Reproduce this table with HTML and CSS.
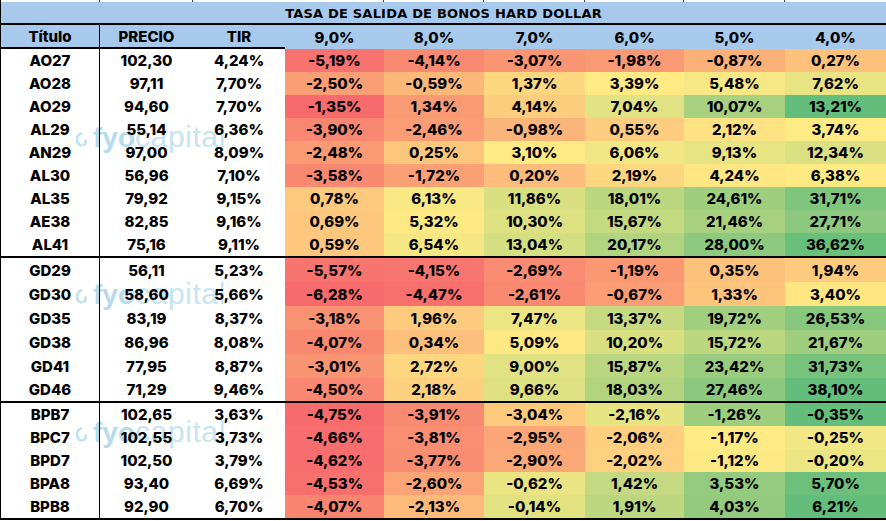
FILE: index.html
```html
<!DOCTYPE html>
<html lang="es">
<head>
<meta charset="utf-8">
<title>Tasa de salida de bonos hard dollar</title>
<link rel="stylesheet" href="styles.css">
</head>
<body>
<div class="sheet">
  <div class="ticks"><span></span><span></span><span></span><span></span><span></span><span></span><span></span><span></span><span></span></div>
  <div class="title">TASA DE SALIDA DE BONOS HARD DOLLAR</div>
  <div class="row head">
    <div class="c n">Título</div><div class="c k">PRECIO</div><div class="c k">TIR</div>
    <div class="c">9,0%</div><div class="c">8,0%</div><div class="c">7,0%</div><div class="c">6,0%</div><div class="c">5,0%</div><div class="c">4,0%</div>
  </div>

  <div class="group g1">
    <div class="row"><div class="c n">AO27</div><div class="c">102,30</div><div class="c">4,24%</div><div class="c" style="background:#F8736F">-5,19%</div><div class="c" style="background:#F98A72">-4,14%</div><div class="c" style="background:#FA9573">-3,07%</div><div class="c" style="background:#FA9A74">-1,98%</div><div class="c" style="background:#FBB078">-0,87%</div><div class="c" style="background:#FCC27C">0,27%</div></div>
    <div class="row"><div class="c n">AO28</div><div class="c">97,11</div><div class="c">7,70%</div><div class="c" style="background:#FA9E75">-2,50%</div><div class="c" style="background:#FCB879">-0,59%</div><div class="c" style="background:#FDD680">1,37%</div><div class="c" style="background:#FFEA84">3,39%</div><div class="c" style="background:#F6E884">5,48%</div><div class="c" style="background:#E9E483">7,62%</div></div>
    <div class="row"><div class="c n">AO29</div><div class="c">94,60</div><div class="c">7,70%</div><div class="c" style="background:#F86B6C">-1,35%</div><div class="c" style="background:#FA9A74">1,34%</div><div class="c" style="background:#FDCD7E">4,14%</div><div class="c" style="background:#E1E283">7,04%</div><div class="c" style="background:#A8D17F">10,07%</div><div class="c" style="background:#63BE7B">13,21%</div></div>
    <div class="row"><div class="c n">AL29</div><div class="c">55,14</div><div class="c">6,36%</div><div class="c" style="background:#F98671">-3,90%</div><div class="c" style="background:#FA9D74">-2,46%</div><div class="c" style="background:#FBB479">-0,98%</div><div class="c" style="background:#FDCC7E">0,55%</div><div class="c" style="background:#FEE283">2,12%</div><div class="c" style="background:#FFEB84">3,74%</div></div>
    <div class="row"><div class="c n">AN29</div><div class="c">97,00</div><div class="c">8,09%</div><div class="c" style="background:#FA9A74">-2,48%</div><div class="c" style="background:#FDC67D">0,25%</div><div class="c" style="background:#FFEA84">3,10%</div><div class="c" style="background:#F1E784">6,06%</div><div class="c" style="background:#E6E483">9,13%</div><div class="c" style="background:#DBE182">12,34%</div></div>
    <div class="row"><div class="c n">AL30</div><div class="c">56,96</div><div class="c">7,10%</div><div class="c" style="background:#F98871">-3,58%</div><div class="c" style="background:#FAA075">-1,72%</div><div class="c" style="background:#FCBC7B">0,20%</div><div class="c" style="background:#FDD680">2,19%</div><div class="c" style="background:#FEE783">4,24%</div><div class="c" style="background:#FEEA83">6,38%</div></div>
    <div class="row"><div class="c n">AL35</div><div class="c">79,92</div><div class="c">9,15%</div><div class="c" style="background:#FDC97D">0,78%</div><div class="c" style="background:#F8E984">6,13%</div><div class="c" style="background:#D8E082">11,86%</div><div class="c" style="background:#BBD780">18,01%</div><div class="c" style="background:#A0CE7F">24,61%</div><div class="c" style="background:#7EC57D">31,71%</div></div>
    <div class="row"><div class="c n">AE38</div><div class="c">82,85</div><div class="c">9,16%</div><div class="c" style="background:#FDC87D">0,69%</div><div class="c" style="background:#FCE983">5,32%</div><div class="c" style="background:#DDE182">10,30%</div><div class="c" style="background:#C4DA81">15,67%</div><div class="c" style="background:#A8D17F">21,46%</div><div class="c" style="background:#8CC97E">27,71%</div></div>
    <div class="row"><div class="c n">AL41</div><div class="c">75,16</div><div class="c">9,11%</div><div class="c" style="background:#FDC77D">0,59%</div><div class="c" style="background:#F5E784">6,54%</div><div class="c" style="background:#D4DF82">13,04%</div><div class="c" style="background:#B0D47F">20,17%</div><div class="c" style="background:#8DC97E">28,00%</div><div class="c" style="background:#68C07B">36,62%</div></div>
  </div>

  <div class="group g2">
    <div class="row"><div class="c n">GD29</div><div class="c">56,11</div><div class="c">5,23%</div><div class="c" style="background:#F8746F">-5,57%</div><div class="c" style="background:#F87670">-4,15%</div><div class="c" style="background:#F98C72">-2,69%</div><div class="c" style="background:#FA9873">-1,19%</div><div class="c" style="background:#FCC27C">0,35%</div><div class="c" style="background:#FDCB7E">1,94%</div></div>
    <div class="row"><div class="c n">GD30</div><div class="c">58,60</div><div class="c">5,66%</div><div class="c" style="background:#F86B6C">-6,28%</div><div class="c" style="background:#F8706D">-4,47%</div><div class="c" style="background:#F98A71">-2,61%</div><div class="c" style="background:#FA9D74">-0,67%</div><div class="c" style="background:#FDC47C">1,33%</div><div class="c" style="background:#FEE683">3,40%</div></div>
    <div class="row"><div class="c n">GD35</div><div class="c">83,19</div><div class="c">8,37%</div><div class="c" style="background:#F99272">-3,18%</div><div class="c" style="background:#FDCB7E">1,96%</div><div class="c" style="background:#ECE583">7,47%</div><div class="c" style="background:#C8DA81">13,37%</div><div class="c" style="background:#A2CF7F">19,72%</div><div class="c" style="background:#86C77D">26,53%</div></div>
    <div class="row"><div class="c n">GD38</div><div class="c">86,96</div><div class="c">8,08%</div><div class="c" style="background:#F98871">-4,07%</div><div class="c" style="background:#FDC07C">0,34%</div><div class="c" style="background:#FEE883">5,09%</div><div class="c" style="background:#D9E082">10,20%</div><div class="c" style="background:#BBD780">15,72%</div><div class="c" style="background:#A0CE7F">21,67%</div></div>
    <div class="row"><div class="c n">GD41</div><div class="c">77,95</div><div class="c">8,87%</div><div class="c" style="background:#F99473">-3,01%</div><div class="c" style="background:#FED680">2,72%</div><div class="c" style="background:#E0E283">9,00%</div><div class="c" style="background:#BAD680">15,87%</div><div class="c" style="background:#99CC7E">23,42%</div><div class="c" style="background:#78C37C">31,73%</div></div>
    <div class="row"><div class="c n">GD46</div><div class="c">71,29</div><div class="c">9,46%</div><div class="c" style="background:#F98771">-4,50%</div><div class="c" style="background:#FDD07F">2,18%</div><div class="c" style="background:#DDE182">9,66%</div><div class="c" style="background:#B3D47F">18,03%</div><div class="c" style="background:#8CC97E">27,46%</div><div class="c" style="background:#63BE7B">38,10%</div></div>
  </div>

  <div class="group g3">
    <div class="row"><div class="c n">BPB7</div><div class="c">102,65</div><div class="c">3,63%</div><div class="c" style="background:#F86B6C">-4,75%</div><div class="c" style="background:#F98A72">-3,91%</div><div class="c" style="background:#FDCA7D">-3,04%</div><div class="c" style="background:#E6E383">-2,16%</div><div class="c" style="background:#9FCE7E">-1,26%</div><div class="c" style="background:#63BE7B">-0,35%</div></div>
    <div class="row"><div class="c n">BPC7</div><div class="c">102,55</div><div class="c">3,73%</div><div class="c" style="background:#F86D6D">-4,66%</div><div class="c" style="background:#F98E72">-3,81%</div><div class="c" style="background:#FBA676">-2,95%</div><div class="c" style="background:#FDCF7E">-2,06%</div><div class="c" style="background:#FFEB84">-1,17%</div><div class="c" style="background:#F1E784">-0,25%</div></div>
    <div class="row"><div class="c n">BPD7</div><div class="c">102,50</div><div class="c">3,79%</div><div class="c" style="background:#F86D6D">-4,62%</div><div class="c" style="background:#F98D72">-3,77%</div><div class="c" style="background:#FBA877">-2,90%</div><div class="c" style="background:#FDD17F">-2,02%</div><div class="c" style="background:#FBEA84">-1,12%</div><div class="c" style="background:#EBE583">-0,20%</div></div>
    <div class="row"><div class="c n">BPA8</div><div class="c">93,40</div><div class="c">6,69%</div><div class="c" style="background:#F8706D">-4,53%</div><div class="c" style="background:#FBA576">-2,60%</div><div class="c" style="background:#EBE483">-0,62%</div><div class="c" style="background:#C4D981">1,42%</div><div class="c" style="background:#94CB7E">3,53%</div><div class="c" style="background:#6CC07B">5,70%</div></div>
    <div class="row"><div class="c n">BPB8</div><div class="c">92,90</div><div class="c">6,70%</div><div class="c" style="background:#F9846F">-4,07%</div><div class="c" style="background:#FCBB7B">-2,13%</div><div class="c" style="background:#E2E283">-0,14%</div><div class="c" style="background:#BDD780">1,91%</div><div class="c" style="background:#93CA7E">4,03%</div><div class="c" style="background:#63BE7B">6,21%</div></div>
  </div>

  <div class="wm wm1"><svg class="logo" viewBox="0 0 16 16" width="16" height="16"><path d="M6 2.5 A6.5 6.5 0 0 0 6 14.5" /><path d="M10.5 9.5 A3.5 3.5 0 0 1 8.5 14" /></svg><span class="fyo">fyo</span><span class="cap">capital</span></div>
  <div class="wm wm2"><svg class="logo" viewBox="0 0 16 16" width="16" height="16"><path d="M6 2.5 A6.5 6.5 0 0 0 6 14.5" /><path d="M10.5 9.5 A3.5 3.5 0 0 1 8.5 14" /></svg><span class="fyo">fyo</span><span class="cap">capital</span></div>
  <div class="wm wm3"><svg class="logo" viewBox="0 0 16 16" width="16" height="16"><path d="M6 2.5 A6.5 6.5 0 0 0 6 14.5" /><path d="M10.5 9.5 A3.5 3.5 0 0 1 8.5 14" /></svg><span class="fyo">fyo</span><span class="cap">capital</span></div>
</div>
</body>
</html>
```

FILE: styles.css
```css
html, body {
  margin: 0;
  padding: 0;
  background: #ffffff;
}

.sheet {
  --cols: 99px 93px 92px 99px 100px 101px 99px 101px 101px;
  position: relative;
  width: 886px;
  box-sizing: border-box;
  border-left: 1px solid #000;
  font-family: Inter, "Liberation Sans", Arial, sans-serif;
  font-weight: 800;
  font-size: 15px;
  color: #000;
}

.ticks {
  display: grid;
  grid-template-columns: var(--cols);
  height: 2px;
}
.ticks span {
  border-right: 1px solid #444;
}
.ticks span:nth-child(3),
.ticks span:last-child {
  border-right: none;
}

.title {
  height: 23px;
  box-sizing: border-box;
  background: #A7C9EB;
  border-bottom: 2px solid #000;
  display: flex;
  align-items: center;
  justify-content: center;
  padding-top: 2px;
  font-family: "DejaVu Sans", Verdana, sans-serif;
  font-size: 13px;
  letter-spacing: 0.2px;
  font-weight: 700;
}

.row {
  position: relative;
  z-index: 1;
  display: grid;
  grid-template-columns: var(--cols);
  height: 23px;
}

.c {
  display: flex;
  align-items: center;
  justify-content: center;
  box-sizing: border-box;
  white-space: nowrap;
}

.n {
  border-right: 1px solid #000;
}

.head {
  height: 24px;
  background: #A7C9EB;
}
.head .n,
.head .k {
  border-bottom: 2px solid #000;
}

.g2 .row {
  height: 24px;
}
.g2 .row:last-child {
  height: 23px;
}

.group + .group {
  border-top: 2px solid #000;
}
.g3 {
  border-bottom: 2px solid #000;
}

.wm {
  position: absolute;
  left: 74px;
  z-index: 0;
  display: flex;
  align-items: baseline;
  font-family: "Liberation Sans", Arial, sans-serif;
  font-size: 30px;
  line-height: 30px;
  color: #C6E5F1;
}
.wm1 { top: 122px; }
.wm2 { top: 279px; }
.wm3 { top: 417px; }

.logo {
  width: 16px;
  height: 16px;
  margin-right: 2px;
  fill: none;
  stroke: #BFE2EF;
  stroke-width: 2.6;
  stroke-linecap: round;
}
.fyo {
  font-weight: 700;
  font-size: 28px;
  color: #B6DCEC;
}
.cap {
  font-weight: 400;
  letter-spacing: 0.6px;
}
```
